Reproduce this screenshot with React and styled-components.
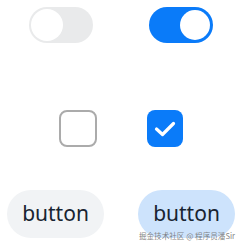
import React from "react";
import styled, { createGlobalStyle } from "styled-components";

const Global = createGlobalStyle`
  html, body { margin: 0; padding: 0; background: #ffffff; }
  body { font-family: "Noto Sans", "Noto Sans CJK SC", sans-serif; }
`;

const Page = styled.div`
  position: relative;
  width: 240px;
  height: 247px;
  display: flex;
  flex-direction: column;
  padding-top: 7px;
  box-sizing: border-box;
  overflow: hidden;
  background: #ffffff;
`;

const Row = styled.div`
  display: flex;
  align-items: center;
  margin-top: ${(p) => p.$top || 0}px;
  padding-left: ${(p) => p.$left || 0}px;
  gap: ${(p) => p.$gap || 0}px;
`;

const Track = styled.div`
  width: 64px;
  height: 36px;
  border-radius: 18px;
  box-sizing: border-box;
  padding: ${(p) => (p.$on ? "3px" : "2px")};
  display: flex;
  justify-content: ${(p) => (p.$on ? "flex-end" : "flex-start")};
  align-items: center;
  background: ${(p) => (p.$on ? "#0a7bf9" : "#e9eaeb")};
`;

const Thumb = styled.div`
  width: ${(p) => (p.$on ? 30 : 32)}px;
  height: ${(p) => (p.$on ? 30 : 32)}px;
  border-radius: 50%;
  background: #ffffff;
`;

const Box = styled.div`
  width: ${(p) => (p.$checked ? 36 : 38)}px;
  height: 37px;
  box-sizing: border-box;
  border-radius: 8px;
  border: ${(p) => (p.$checked ? "none" : "2px solid #ababab")};
  background: ${(p) => (p.$checked ? "#0a7bf9" : "#ffffff")};
  display: flex;
  align-items: center;
  justify-content: center;
`;

const Pill = styled.div`
  width: 97px;
  height: 48px;
  border-radius: 24px;
  background: ${(p) => (p.$tone === "blue" ? "#cde3fc" : "#f1f3f5")};
  color: #182431;
  font-family: "Noto Sans", sans-serif;
  font-size: 21px;
  display: flex;
  align-items: center;
  justify-content: center;
  line-height: 1;
  padding-bottom: 2px;
  box-sizing: border-box;
`;

const Watermark = styled.div`
  position: absolute;
  right: 5px;
  bottom: 6px;
  font-family: "Noto Sans CJK SC", "Noto Sans", sans-serif;
  font-size: 7.6px;
  line-height: 10px;
  color: rgba(110, 110, 110, 0.85);
  white-space: nowrap;
`;

function Toggle({ on }) {
  return (
    <Track $on={on}>
      <Thumb $on={on} />
    </Track>
  );
}

function Checkbox({ checked }) {
  return (
    <Box $checked={checked}>
      {checked && (
        <svg width="36" height="37" viewBox="0 0 36 37">
          <path
            d="M9.5 19 L15.5 24.5 L26.5 13.5"
            fill="none"
            stroke="#ffffff"
            strokeWidth="3.2"
            strokeLinecap="round"
            strokeLinejoin="round"
          />
        </svg>
      )}
    </Box>
  );
}

export default function App() {
  return (
    <>
      <Global />
      <Page>
        <Row $left={29} $gap={56}>
          <Toggle on={false} />
          <Toggle on={true} />
        </Row>
        <Row $top={67} $left={59} $gap={50}>
          <Checkbox checked={false} />
          <Checkbox checked={true} />
        </Row>
        <Row $top={43} $left={7} $gap={34}>
          <Pill>button</Pill>
          <Pill $tone="blue">button</Pill>
        </Row>
        <Watermark>掘金技术社区 @ 程序员潘Sir</Watermark>
      </Page>
    </>
  );
}
